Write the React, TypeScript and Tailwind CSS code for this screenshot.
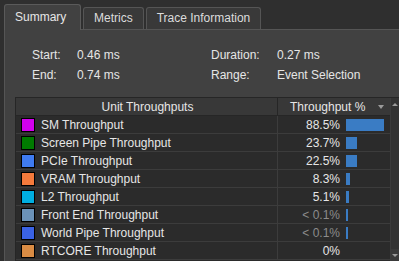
const ROWS = [
  { name: "SM Throughput", color: "#d200ee", value: "88.5%", bar: 38, dim: false },
  { name: "Screen Pipe Throughput", color: "#007a00", value: "23.7%", bar: 11, dim: false },
  { name: "PCIe Throughput", color: "#3f7bf0", value: "22.5%", bar: 11, dim: false },
  { name: "VRAM Throughput", color: "#f47a3c", value: "8.3%", bar: 4, dim: false },
  { name: "L2 Throughput", color: "#00aee0", value: "5.1%", bar: 3, dim: false },
  { name: "Front End Throughput", color: "#6b92b8", value: "< 0.1%", bar: 2, dim: true },
  { name: "World Pipe Throughput", color: "#3a62e4", value: "< 0.1%", bar: 2, dim: true },
  { name: "RTCORE Throughput", color: "#d98c44", value: "0%", bar: 0, dim: false },
];

function Tab({ label, active }: { label: string; active?: boolean }) {
  if (active) {
    return (
      <div className="relative z-10 -mb-px h-[26px] w-[77px] rounded-t-[3px] border border-b-0 border-[#5a5a5a] bg-[#414141] pt-[4px] pl-[10px] text-[#e6e6e6]">
        {label}
      </div>
    );
  }
  return (
    <div className="h-[22px] rounded-t-[3px] border border-b-0 border-[#555] bg-[#393939] px-[10px] pt-[2px] text-[#dcdcdc]">
      {label}
    </div>
  );
}

export default function App() {
  return (
    <div
      className="flex h-[261px] w-[399px] flex-col overflow-hidden bg-[#2f2f2f] pt-[4px] pl-[4px] text-[12px] leading-[16px]"
      style={{ fontFamily: '"Liberation Sans", Arial, sans-serif' }}
    >
      <div className="flex items-end gap-[2px]">
        <Tab label="Summary" active />
        <Tab label="Metrics" />
        <Tab label="Trace Information" />
      </div>

      <div className="flex flex-1 flex-col border-t border-l border-[#555] bg-[#414141]">
        <div className="grid grid-cols-[45px_134px_66px_1fr] gap-y-[4px] pt-[17px] pl-[27px] text-[#e6e6e6]">
          <span>Start:</span>
          <span>0.46 ms</span>
          <span>Duration:</span>
          <span>0.27 ms</span>
          <span>End:</span>
          <span>0.74 ms</span>
          <span>Range:</span>
          <span>Event Selection</span>
        </div>

        <div className="mt-[14px] ml-[10px] flex flex-1 border-t border-l border-[#262626] bg-[#2b2b2b]">
          <div className="flex w-[375px] flex-col">
            <div className="flex h-[18px] border-b border-[#262626] bg-[#383838] text-[#e6e6e6]">
              <div className="flex w-[262px] items-center justify-center border-r border-[#262626] pl-[2px]">
                Unit Throughputs
              </div>
              <div className="relative flex flex-1 items-center pl-[12px]">
                Throughput %
                <span className="absolute right-[6px] top-[7px] h-0 w-0 border-x-[3px] border-t-[4px] border-x-transparent border-t-[#9a9a9a]" />
              </div>
            </div>
            {ROWS.map((r) => (
              <div key={r.name} className="flex h-[18px] border-b border-[#3c3c3c] text-[#e6e6e6]">
                <div className="flex w-[262px] items-center border-r border-[#3c3c3c] pl-[5px]">
                  <span
                    className="mr-[6px] h-[14px] w-[14px] border border-black"
                    style={{ backgroundColor: r.color }}
                  />
                  {r.name}
                </div>
                <div className="flex flex-1 items-center">
                  <span className={`w-[62px] text-right ${r.dim ? "text-[#8c8c8c]" : ""}`}>{r.value}</span>
                  {r.bar > 0 && (
                    <span className="ml-[6px] h-[12px] bg-[#3a7cc4]" style={{ width: r.bar }} />
                  )}
                </div>
              </div>
            ))}
          </div>
          <div className="flex w-[9px] flex-col justify-between border-l border-[#3c3c3c] bg-[#333]">
            <div className="flex h-[12px] items-center justify-center">
              <span className="h-0 w-0 border-x-[3px] border-b-[3px] border-x-transparent border-b-[#9a9a9a]" />
            </div>
            <div className="flex h-[12px] items-center justify-center bg-[#3a3a3a]">
              <span className="h-0 w-0 border-x-[3px] border-t-[3px] border-x-transparent border-t-[#9a9a9a]" />
            </div>
          </div>
        </div>
      </div>
    </div>
  );
}
